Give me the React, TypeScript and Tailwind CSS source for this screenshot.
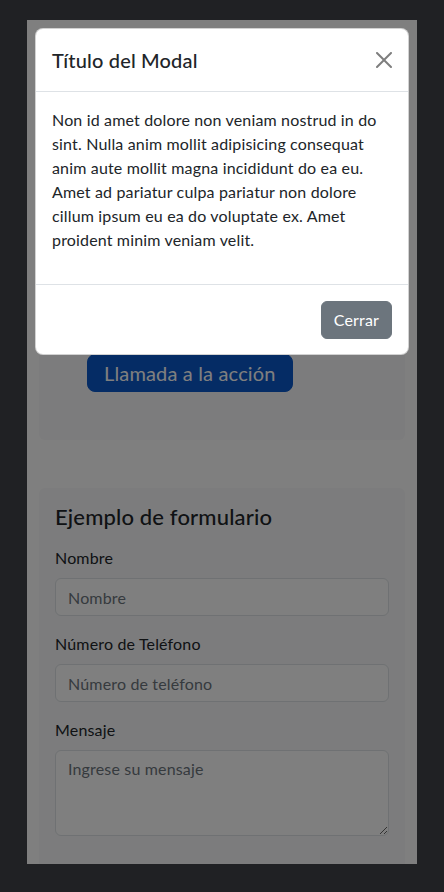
import React from "react";

function Field({ label, placeholder }: { label: string; placeholder: string }) {
  return (
    <div className="mb-4 flex flex-col">
      <label className="mb-2 text-[16px] leading-[24px] text-[#212529]">{label}</label>
      <input
        type="text"
        placeholder={placeholder}
        className="h-[38px] w-full rounded-md border border-[#dee2e6] bg-white px-3 text-[16px] leading-[24px] text-[#212529] placeholder:text-[#6c757d]"
      />
    </div>
  );
}

export default function App() {
  return (
    <div className="h-[892px] w-[444px] bg-[#202124] pl-[27px] pt-[20px] [font-family:Lato,'Noto_Sans',sans-serif] tracking-[0.01em]">
      <div className="relative h-[844px] w-[390px] overflow-hidden bg-white">
        {/* page content */}
        <div className="flex flex-col gap-12 px-3 pt-3">
          <section className="flex flex-col items-start rounded-md bg-[#f8f9fa] p-12">
            <div className="mb-4 h-[258px] w-full" />
            <button className="h-[38px] rounded-lg border border-[#0a58ca] bg-[#0a58ca] px-4 text-[20px] leading-[24px] text-white">
              Llamada a la acción
            </button>
          </section>

          <section className="rounded-md bg-[#f8f9fa] px-4 pb-12 pt-4">
            <h4 className="mb-4 text-[22px] font-medium leading-[26px] text-[#212529]">Ejemplo de formulario</h4>
            <Field label="Nombre" placeholder="Nombre" />
            <Field label="Número de Teléfono" placeholder="Número de teléfono" />
            <div className="mb-4 flex flex-col">
              <label className="mb-2 text-[16px] leading-[24px] text-[#212529]">Mensaje</label>
              <textarea
                rows={3}
                placeholder="Ingrese su mensaje"
                className="h-[86px] w-full rounded-md border border-[#dee2e6] bg-white px-3 py-1.5 text-[16px] leading-[24px] text-[#212529] placeholder:text-[#6c757d]"
              />
            </div>
          </section>
        </div>

        {/* backdrop */}
        <div className="absolute inset-0 bg-black/50" />

        {/* modal */}
        <div className="absolute left-2 right-2 top-2 rounded-lg border border-black/[0.175] bg-white">
          <div className="flex items-center justify-between border-b border-[#dee2e6] p-4">
            <h5 className="text-[20px] font-medium leading-[30px] text-[#212529]">Título del Modal</h5>
            <button aria-label="Cerrar" className="flex h-4 w-4 items-center justify-center opacity-50">
              <svg viewBox="0 0 16 16" width="16" height="16" fill="#000">
                <path d="M.293.293a1 1 0 0 1 1.414 0L8 6.586 14.293.293a1 1 0 1 1 1.414 1.414L9.414 8l6.293 6.293a1 1 0 0 1-1.414 1.414L8 9.414l-6.293 6.293a1 1 0 0 1-1.414-1.414L6.586 8 .293 1.707a1 1 0 0 1 0-1.414z" />
              </svg>
            </button>
          </div>
          <div className="p-4">
            <p className="mb-4 text-[16px] leading-[24px] text-[#212529]">
              Non id amet dolore non veniam nostrud in do sint. Nulla anim mollit adipisicing consequat anim aute mollit
              magna incididunt do ea eu. Amet ad pariatur culpa pariatur non dolore cillum ipsum eu ea do voluptate ex.
              Amet proident minim veniam velit.
            </p>
          </div>
          <div className="flex justify-end border-t border-[#dee2e6] px-4 pb-[15px] pt-4">
            <button className="h-[38px] rounded-md border border-[#6c757d] bg-[#6c757d] px-3 text-[16px] leading-[24px] text-white">
              Cerrar
            </button>
          </div>
        </div>
      </div>
    </div>
  );
}
